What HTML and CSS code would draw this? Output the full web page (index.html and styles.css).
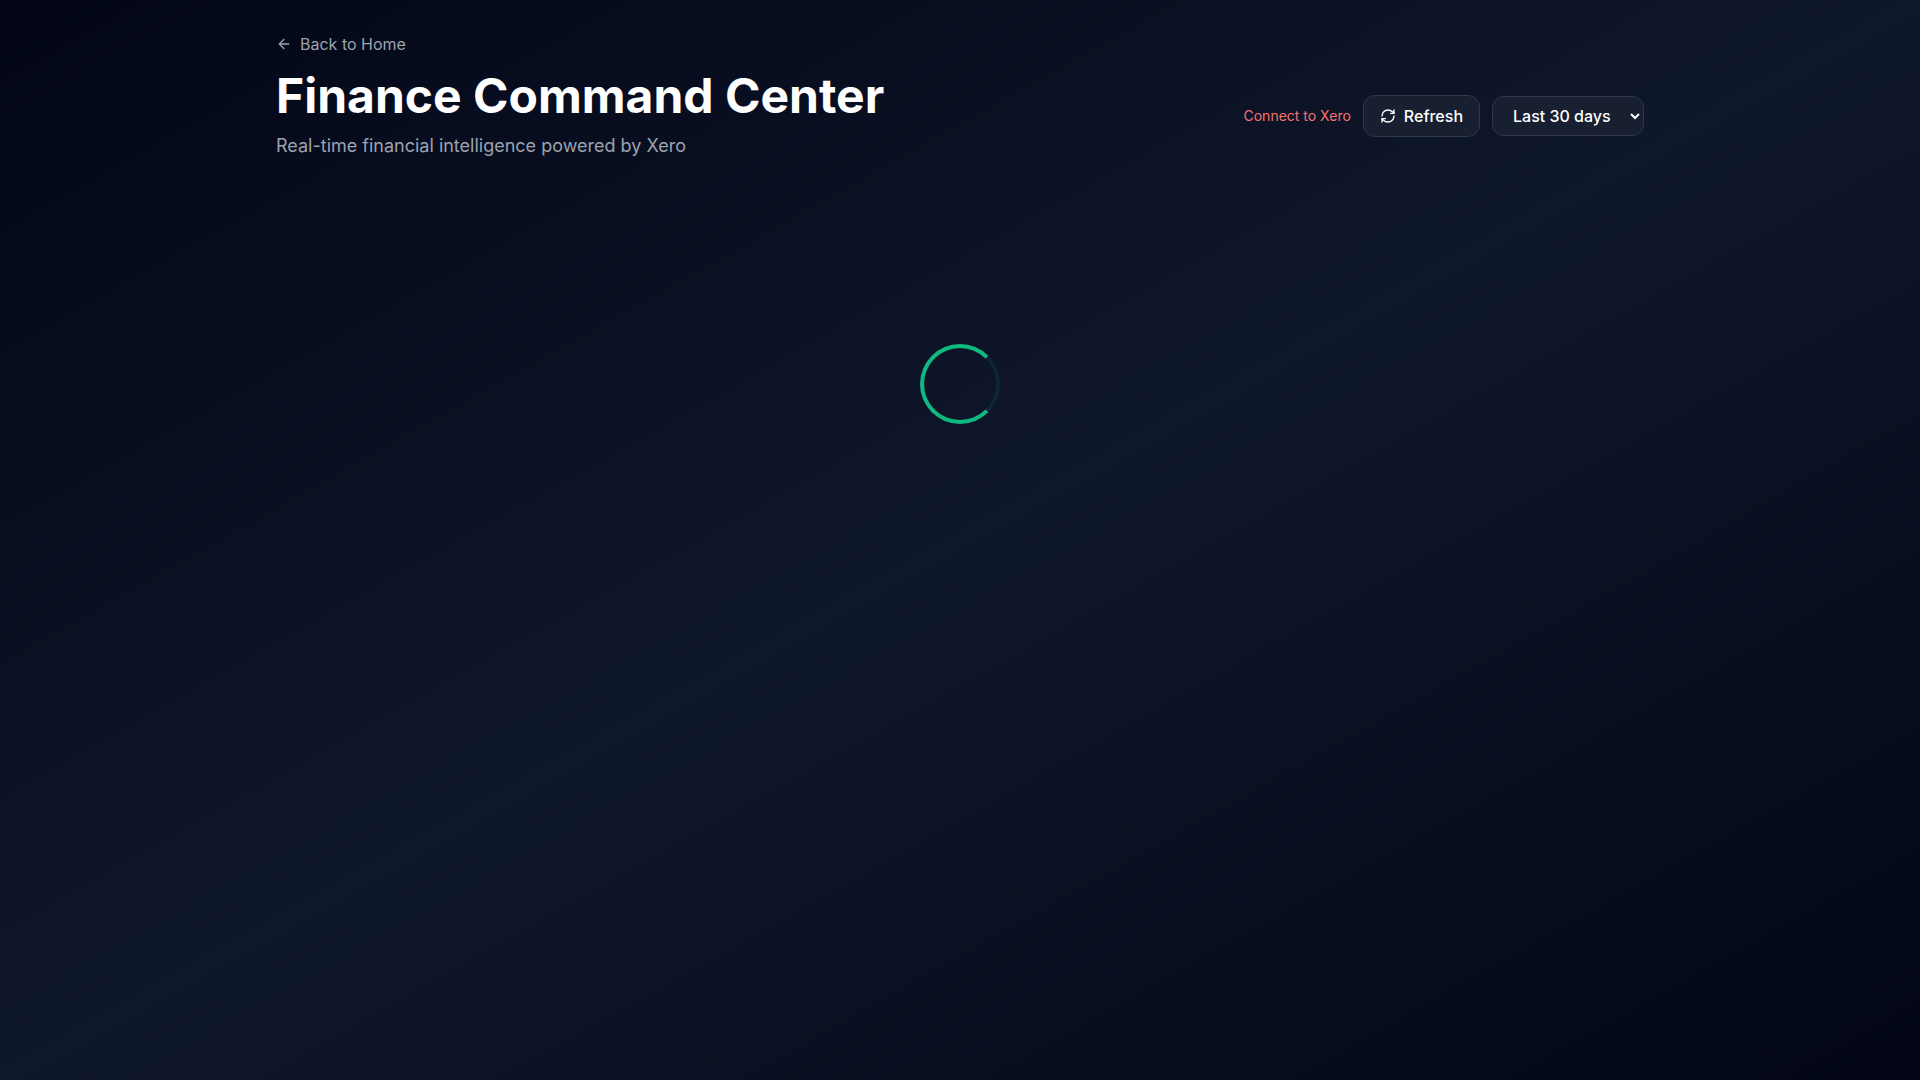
FILE: index.html
```
<!DOCTYPE html>
<html lang="en">
<head>
<meta charset="utf-8">
<meta name="viewport" content="width=device-width, initial-scale=1">
<title>Finance Command Center</title>
<link rel="stylesheet" href="styles.css">
</head>
<body>
<div class="container">
  <header class="header">
    <div class="intro">
      <a class="back" href="#">
        <svg class="icon" viewBox="0 0 24 24" aria-hidden="true"><path d="m12 19-7-7 7-7"/><path d="M19 12H5"/></svg>
        Back to Home
      </a>
      <h1 class="title">Finance Command Center</h1>
      <p class="subtitle">Real-time financial intelligence powered by Xero</p>
    </div>
    <div class="actions">
      <a class="connect" href="#">Connect to Xero</a>
      <button class="refresh" type="button">
        <svg class="icon" viewBox="0 0 24 24" aria-hidden="true"><path d="M21 12a9 9 0 0 0-9-9 9.75 9.75 0 0 0-6.74 2.74L3 8" transform="matrix(-1 0 0 1 24 0)"/><path d="M21 3v5h-5"/><path d="M21 12a9 9 0 0 1-9 9 9.75 9.75 0 0 1-6.74-2.74L3 16"/><path d="M8 16H3v5"/></svg>
        Refresh
      </button>
      <select class="range" aria-label="Date range">
        <option>Last 7 days</option>
        <option selected>Last 30 days</option>
        <option>Last 90 days</option>
      </select>
    </div>
  </header>
  <main class="loading">
    <div class="spinner" role="status" aria-label="Loading"></div>
  </main>
</div>
</body>
</html>
```
FILE: styles.css
```
* {
  box-sizing: border-box;
}

body {
  margin: 0;
  min-height: 100vh;
  padding: 32px;
  font-family: Inter, sans-serif;
  color: #fff;
  background: linear-gradient(to bottom right, #020617, #0f172a, #020617);
}

.container {
  max-width: 1368px;
  margin: 0 auto;
}

.header {
  display: flex;
  align-items: center;
  justify-content: space-between;
  gap: 24px;
}

.intro {
  display: flex;
  flex-direction: column;
  align-items: flex-start;
}

.back {
  display: inline-flex;
  align-items: center;
  gap: 8px;
  font-size: 16px;
  line-height: 24px;
  color: #9ca3af;
  text-decoration: none;
}

.icon {
  width: 16px;
  height: 16px;
  fill: none;
  stroke: currentColor;
  stroke-width: 2;
  stroke-linecap: round;
  stroke-linejoin: round;
}

.title {
  margin: 12px 0 8px;
  font-size: 48px;
  line-height: 56px;
  font-weight: 700;
}

.subtitle {
  margin: 0;
  font-size: 18px;
  line-height: 28px;
  color: #9ca3af;
}

.actions {
  display: flex;
  align-items: center;
  gap: 12px;
  padding-top: 40px;
}

.connect {
  font-size: 14px;
  line-height: 20px;
  color: #f87171;
  text-decoration: none;
}

.refresh,
.range {
  border: 1px solid #2c3b4c;
  border-radius: 12px;
  background: #171f31;
  color: #fff;
  font: 500 16px/24px Inter, sans-serif;
}

.refresh {
  display: inline-flex;
  align-items: center;
  gap: 8px;
  padding: 8px 16px;
}

.range {
  height: 40px;
  padding: 0 16px;
}

.loading {
  display: flex;
  justify-content: center;
  padding-top: 184px;
}

.spinner {
  width: 80px;
  height: 80px;
  border: 4px solid #10b981;
  border-right-color: rgba(16, 185, 129, 0.12);
  border-radius: 50%;
}
```
